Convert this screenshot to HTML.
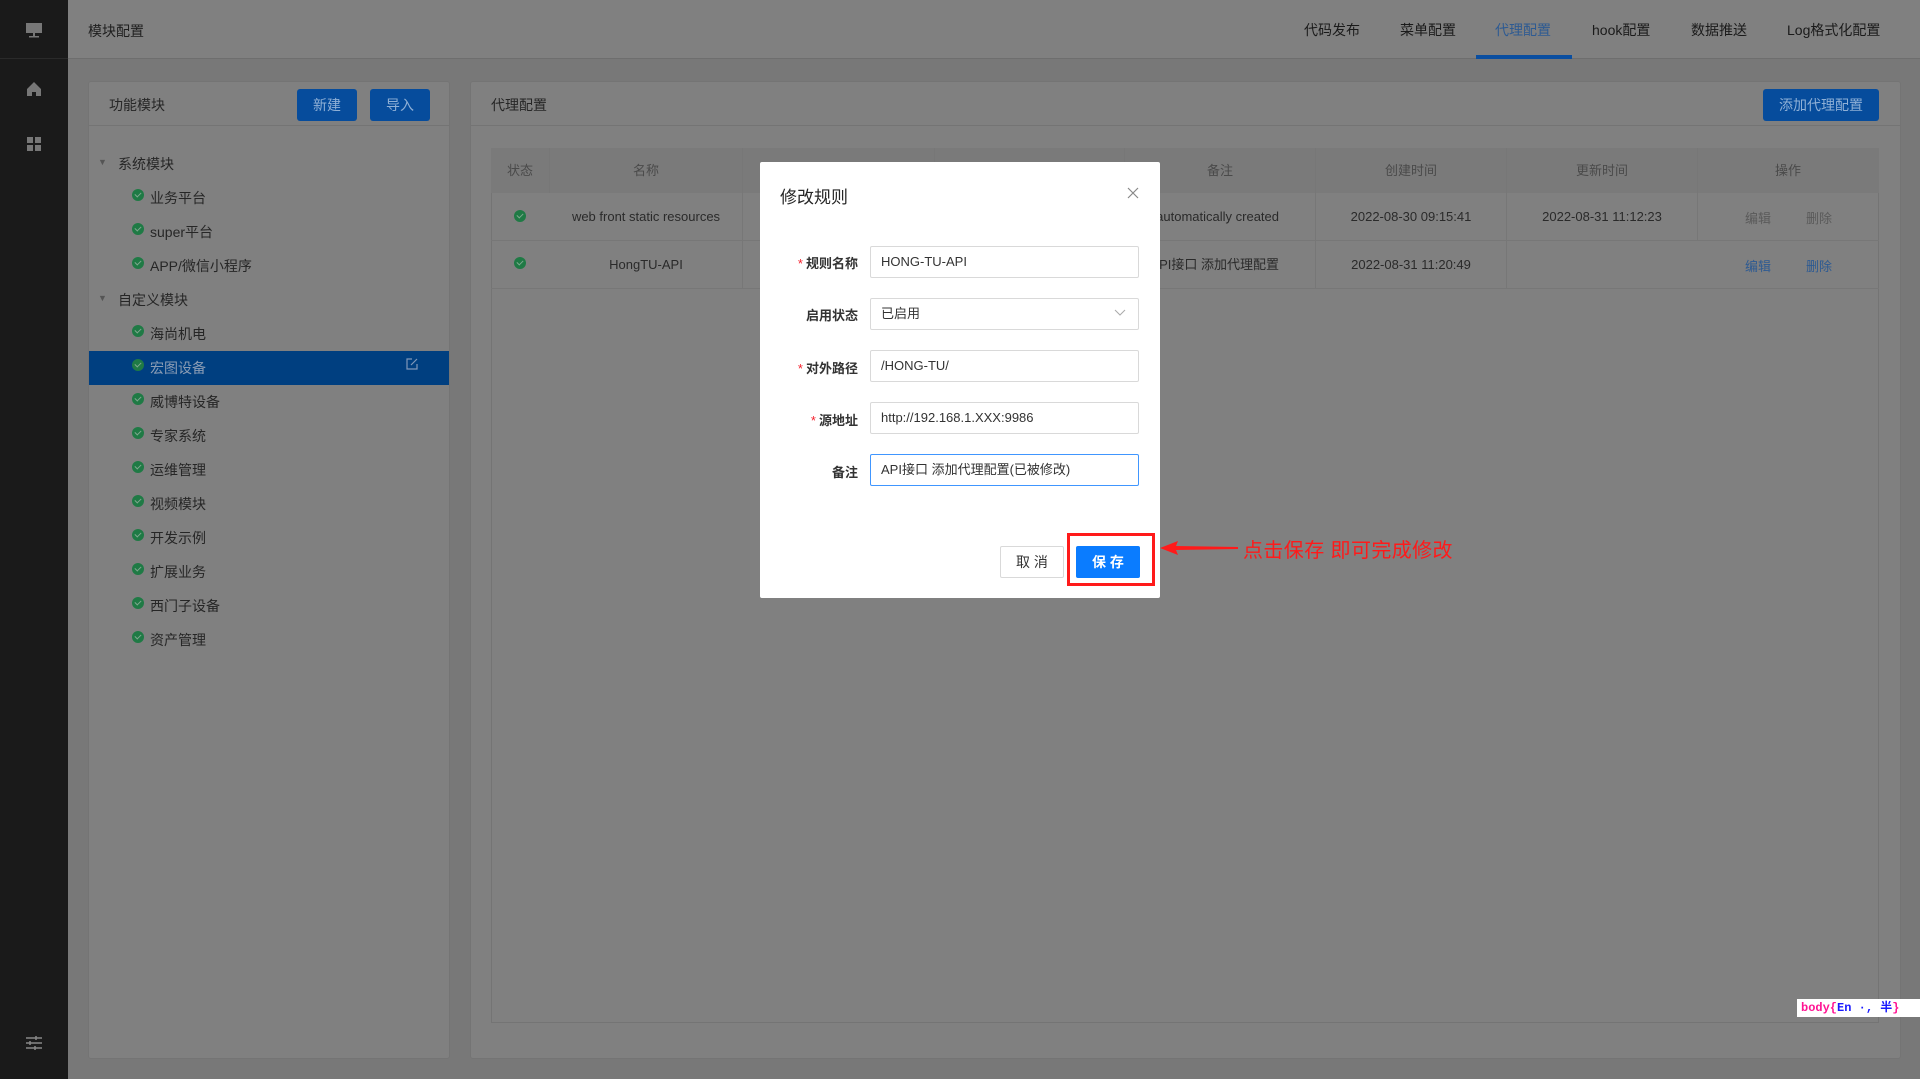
<!DOCTYPE html>
<html><head><meta charset="utf-8"><style>
*{box-sizing:border-box;margin:0;padding:0}
body{width:1920px;height:1079px;position:relative;overflow:hidden;background:#787878;font-family:"Liberation Sans","Noto Sans CJK SC",sans-serif;font-size:13px;color:#1e1e1e}
.a{position:absolute}
.side{left:0;top:0;width:68px;height:1079px;background:#1a1a1a}
.hdr{left:68px;top:0;width:1852px;height:59px;background:#808080;border-bottom:1px solid #6e6e6e}
.tab{top:20px;font-size:14px;color:#1a1a1a}
.panel{background:#808080;border:1px solid #747474;border-radius:3px}
.btn{background:#064c9c;color:#8fb0d6;border-radius:3px;font-size:14px;text-align:center;line-height:32px}
.tree{font-size:14px;color:#262626}
.chk{width:12px;height:12px;border-radius:50%;background:#1f7a45}
.chk:after{content:"";position:absolute;left:3px;top:3px;width:5px;height:3px;border-left:1.5px solid #80a890;border-bottom:1.5px solid #80a890;transform:rotate(-45deg)}
.th{top:148px;height:45px;line-height:45px;text-align:center;color:#4a4a4a;border-right:1px solid #777}
.td{height:47px;line-height:47px;text-align:center;color:#2a2a2a;border-right:1px solid #777}
.lbl{width:100px;left:758px;text-align:right;font-size:13px;font-weight:bold;color:#333}
.lbl i{color:#f5222d;font-style:normal;font-weight:normal;margin-right:3px}
.inp{left:870px;width:269px;height:32px;border:1px solid #d9d9d9;border-radius:2px;background:#fff;line-height:30px;padding-left:10px;font-size:13px;color:#333}
</style></head><body>
<div class="a side">
 <div class="a" style="left:0;top:58px;width:68px;height:1px;background:#2a2a2a"></div>
 <svg class="a" style="left:24px;top:21px" width="20" height="18" viewBox="0 0 20 18"><rect x="2" y="2" width="16" height="10" fill="#777"/><rect x="9" y="12" width="2" height="3" fill="#777"/><rect x="5" y="15" width="10" height="1.5" fill="#777"/></svg>
 <svg class="a" style="left:24px;top:80px" width="20" height="18" viewBox="0 0 20 18"><path d="M10 2 L3 9 V16 H8 V12 H12 V16 H17 V9 Z" fill="#777"/></svg>
 <svg class="a" style="left:24px;top:135px" width="20" height="18" viewBox="0 0 20 18"><rect x="3" y="2" width="6" height="6" fill="#777"/><rect x="11" y="2" width="6" height="6" fill="#777"/><rect x="3" y="10" width="6" height="6" fill="#777"/><rect x="11" y="10" width="6" height="6" fill="#777"/></svg>
 <svg class="a" style="left:24px;top:1034px" width="20" height="18" viewBox="0 0 20 18" stroke="#888" stroke-width="1.5"><path d="M2 4H18M2 9H18M2 14H18"/><path d="M12 2V6M6 7V11M11 12V16"/></svg>
</div>
<div class="a hdr">
 <div class="a" style="left:20px;top:21px;font-size:14px">模块配置</div>
 <div class="a tab" style="left:1236px">代码发布</div>
 <div class="a tab" style="left:1332px">菜单配置</div>
 <div class="a tab" style="left:1427px;color:#2d5a92">代理配置</div>
 <div class="a" style="left:1408px;top:55px;width:96px;height:4px;background:#0a4ea0"></div>
 <div class="a tab" style="left:1524px">hook配置</div>
 <div class="a tab" style="left:1623px">数据推送</div>
 <div class="a tab" style="left:1719px">Log格式化配置</div>
</div>

<div class="a panel" style="left:88px;top:81px;width:362px;height:978px">
 <div class="a" style="left:0;top:43px;width:360px;height:1px;background:#747474"></div>
 <div class="a" style="left:20px;top:13px;font-size:14px;color:#262626">功能模块</div>
 <div class="a btn" style="left:208px;top:7px;width:60px">新建</div>
 <div class="a btn" style="left:281px;top:7px;width:60px">导入</div>
</div>
<div class="a" style="left:89px;top:351px;width:360px;height:34px;background:#003f80"></div>
<svg class="a" style="left:405px;top:357px" width="14" height="14" viewBox="0 0 14 14" fill="none" stroke="#8098b8" stroke-width="1.2"><path d="M7 2H2V12H12V7"/><path d="M6 8L12 2"/></svg>
<div class="tree">
 <div class="a" style="left:98px;top:157px;font-size:9px;color:#555">▼</div>
 <div class="a" style="left:118px;top:154px">系统模块</div>
 <div class="a" style="left:98px;top:293px;font-size:9px;color:#555">▼</div>
 <div class="a" style="left:118px;top:290px">自定义模块</div>
 <div class="a chk" style="left:132px;top:189px"></div><div class="a" style="left:150px;top:188px">业务平台</div>
 <div class="a chk" style="left:132px;top:223px"></div><div class="a" style="left:150px;top:222px">super平台</div>
 <div class="a chk" style="left:132px;top:257px"></div><div class="a" style="left:150px;top:256px">APP/微信小程序</div>
 <div class="a chk" style="left:132px;top:325px"></div><div class="a" style="left:150px;top:324px">海尚机电</div>
 <div class="a chk" style="left:132px;top:359px"></div><div class="a" style="left:150px;top:358px;color:#8a9cb4">宏图设备</div>
 <div class="a chk" style="left:132px;top:393px"></div><div class="a" style="left:150px;top:392px">威博特设备</div>
 <div class="a chk" style="left:132px;top:427px"></div><div class="a" style="left:150px;top:426px">专家系统</div>
 <div class="a chk" style="left:132px;top:461px"></div><div class="a" style="left:150px;top:460px">运维管理</div>
 <div class="a chk" style="left:132px;top:495px"></div><div class="a" style="left:150px;top:494px">视频模块</div>
 <div class="a chk" style="left:132px;top:529px"></div><div class="a" style="left:150px;top:528px">开发示例</div>
 <div class="a chk" style="left:132px;top:563px"></div><div class="a" style="left:150px;top:562px">扩展业务</div>
 <div class="a chk" style="left:132px;top:597px"></div><div class="a" style="left:150px;top:596px">西门子设备</div>
 <div class="a chk" style="left:132px;top:631px"></div><div class="a" style="left:150px;top:630px">资产管理</div>
</div>

<div class="a panel" style="left:470px;top:81px;width:1431px;height:978px">
 <div class="a" style="left:0;top:43px;width:1429px;height:1px;background:#747474"></div>
 <div class="a" style="left:20px;top:13px;font-size:14px;color:#262626">代理配置</div>
 <div class="a btn" style="left:1292px;top:7px;width:116px">添加代理配置</div>
</div>
<div class="a" style="left:491px;top:148px;width:1388px;height:875px;border:1px solid #747474;border-top:none"></div>
<div class="a" style="left:491px;top:148px;width:1388px;height:45px;background:#7a7a7a"></div>
<div class="a" style="left:491px;top:240px;width:1388px;height:1px;background:#777"></div>
<div class="a" style="left:491px;top:288px;width:1388px;height:1px;background:#777"></div>
<div class="a th" style="left:491px;width:59px">状态</div>
<div class="a th" style="left:550px;width:193px">名称</div>
<div class="a th" style="left:743px;width:192px">代理路径</div>
<div class="a th" style="left:935px;width:190px">源地址</div>
<div class="a th" style="left:1125px;width:191px">备注</div>
<div class="a th" style="left:1316px;width:191px">创建时间</div>
<div class="a th" style="left:1507px;width:191px">更新时间</div>
<div class="a th" style="left:1698px;width:180px;border:none">操作</div>
<div class="a chk" style="left:514px;top:210px"></div>
<div class="a chk" style="left:514px;top:257px"></div>
<div class="a td" style="left:550px;top:193px;width:193px">web front static resources</div>
<div class="a td" style="left:550px;top:241px;width:193px">HongTU-API</div>
<div class="a td" style="left:1125px;top:193px;width:191px;text-align:right;padding-right:36px;overflow:hidden;white-space:nowrap">automatically created</div>
<div class="a td" style="left:1125px;top:241px;width:191px;text-align:right;padding-right:36px;overflow:hidden;white-space:nowrap">API接口 添加代理配置</div>
<div class="a td" style="left:1316px;top:193px;width:191px">2022-08-30 09:15:41</div>
<div class="a td" style="left:1316px;top:241px;width:191px">2022-08-31 11:20:49</div>
<div class="a td" style="left:1507px;top:193px;width:191px">2022-08-31 11:12:23</div>
<div class="a" style="left:1745px;top:208px;color:#5a5a5a">编辑</div>
<div class="a" style="left:1806px;top:208px;color:#5a5a5a">删除</div>
<div class="a" style="left:1745px;top:256px;color:#2d5a92">编辑</div>
<div class="a" style="left:1806px;top:256px;color:#2d5a92">删除</div>

<div class="a" style="left:760px;top:162px;width:400px;height:436px;background:#fff;border-radius:2px"></div>
<div class="a" style="left:780px;top:183px;font-size:17px;color:#262626">修改规则</div>
<svg class="a" style="left:1127px;top:187px" width="12" height="12" viewBox="0 0 12 12" stroke="#888" stroke-width="1.2"><path d="M1 1L11 11M11 1L1 11"/></svg>
<div class="a lbl" style="top:253px"><i>*</i>规则名称</div>
<div class="a inp" style="top:246px">HONG-TU-API</div>
<div class="a lbl" style="top:305px">启用状态</div>
<div class="a inp" style="top:298px">已启用</div>
<svg class="a" style="left:1114px;top:309px" width="12" height="8" viewBox="0 0 12 8" fill="none" stroke="#aaa" stroke-width="1"><path d="M1 1L6 6L11 1"/></svg>
<div class="a lbl" style="top:358px"><i>*</i>对外路径</div>
<div class="a inp" style="top:350px">/HONG-TU/</div>
<div class="a lbl" style="top:410px"><i>*</i>源地址</div>
<div class="a inp" style="top:402px">http://192.168.1.XXX:9986</div>
<div class="a lbl" style="top:462px">备注</div>
<div class="a inp" style="top:454px;border-color:#4096ff">API接口 添加代理配置(已被修改)</div>
<div class="a" style="left:1000px;top:546px;width:64px;height:32px;border:1px solid #d9d9d9;border-radius:2px;text-align:center;line-height:30px;font-size:14px;color:#333">取 消</div>
<div class="a" style="left:1076px;top:546px;width:64px;height:32px;background:#0a7cff;border-radius:2px;text-align:center;line-height:32px;font-size:14px;color:#fff;font-weight:bold">保 存</div>
<div class="a" style="left:1067px;top:533px;width:88px;height:53px;border:3px solid #ff1a1a"></div>
<svg class="a" style="left:1158px;top:538px" width="82" height="20" viewBox="0 0 82 20"><path d="M2 10L20 3L18 8L80 9L80 11L18 12L20 17Z" fill="#ff1a1a"/></svg>
<div class="a" style="left:1243px;top:534px;font-size:20px;letter-spacing:0.4px;color:#ff1a1a">点击保存 即可完成修改</div>

<div class="a" style="left:1797px;top:999px;width:123px;height:18px;background:#fff;font-family:'Liberation Mono','Noto Sans CJK SC',monospace;font-size:12px;font-weight:bold;line-height:18px;padding-left:4px;white-space:nowrap;overflow:hidden"><span style="color:#ff1493">body{</span><span style="color:#1a1aff">En ·, 半</span><span style="color:#ff1493">}</span></div>
</body></html>
